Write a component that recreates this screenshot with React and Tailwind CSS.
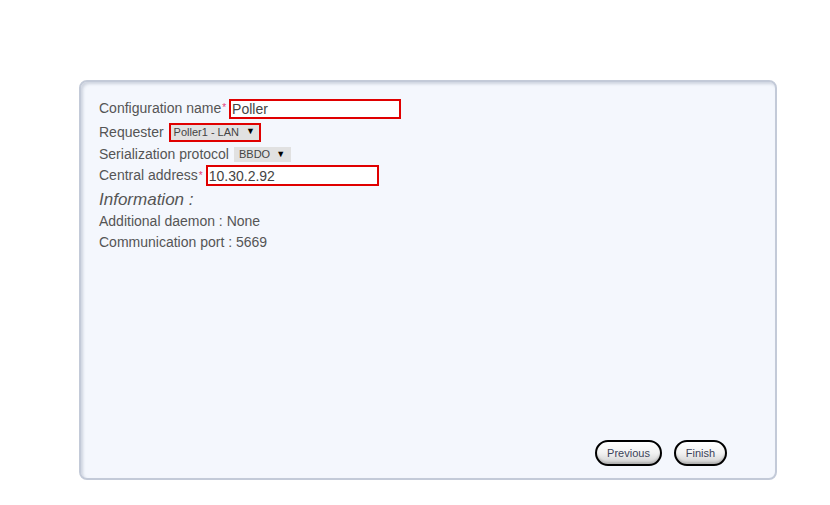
export default function App() {
  const font = { fontFamily: '"Liberation Sans", Arial, sans-serif' };
  return (
    <div className="w-[830px] h-[505px] bg-white relative" style={font}>
      <div className="pt-[80px] pl-[79px]">
        <div className="w-[698px] h-[400px] rounded-[8px] border-2 border-[#c3cad8] bg-[#f4f7fd] shadow-[inset_2px_2px_3px_rgba(150,160,180,0.4)] flex flex-col pl-[18px] pt-[15px] pr-[48px] pb-[12px] text-[#555] text-[14px]">
          <div className="flex items-center h-[23px]">
            <span>Configuration name</span>
            <span className="text-[#e0407a] text-[10px] self-start mt-[3px] ml-[1px]">*</span>
            <div className="w-[172px] h-[20px] border-2 border-[#e00000] bg-white ml-[3px] flex items-center pl-[1px] text-[14px] text-[#444] leading-none">Poller</div>
          </div>
          <div className="flex items-center h-[24px]">
            <span>Requester</span>
            <div className="ml-[5px] h-[19px] w-[92px] border-2 border-[#e00000] bg-[#e1e1e1] flex items-center pl-[3px] text-[11px] text-[#444]">
              <span>Poller1 - LAN</span>
              <span className="ml-[7px] text-[9px] text-black">▼</span>
            </div>
          </div>
          <div className="flex items-center h-[21px]">
            <span>Serialization protocol</span>
            <div className="ml-[5px] h-[15px] w-[57px] bg-[#e1e1e1] flex items-center pl-[5px] text-[11px] text-[#444]">
              <span>BBDO</span>
              <span className="ml-[6px] text-[9px] text-black">▼</span>
            </div>
          </div>
          <div className="flex items-center h-[21px]">
            <span>Central address</span>
            <span className="text-[#e0407a] text-[10px] self-start mt-[3px] ml-[1px]">*</span>
            <div className="w-[173px] h-[21px] border-2 border-[#e00000] bg-white ml-[3px] flex items-center pl-[1px] text-[14px] text-[#444] leading-none">10.30.2.92</div>
          </div>
          <div className="italic text-[17px] mt-[3px] h-[22px] leading-[22px]">Information :</div>
          <div className="h-[21px] leading-[21px]">Additional daemon : None</div>
          <div className="h-[20px] leading-[20px]">Communication port : 5669</div>
          <div className="flex-1" />
          <div className="flex justify-end gap-[12px]">
            <button className="w-[67px] h-[26px] rounded-full border-2 border-black bg-gradient-to-b from-white via-[#f2f2f2] to-[#cfcfcf] text-[11px] text-[#3a4258] shadow-[inset_0_-2px_2px_rgba(0,0,0,0.15)]">Previous</button>
            <button className="w-[53px] h-[26px] rounded-full border-2 border-black bg-gradient-to-b from-white via-[#f2f2f2] to-[#cfcfcf] text-[11px] text-[#3a4258] shadow-[inset_0_-2px_2px_rgba(0,0,0,0.15)]">Finish</button>
          </div>
        </div>
      </div>
    </div>
  );
}
